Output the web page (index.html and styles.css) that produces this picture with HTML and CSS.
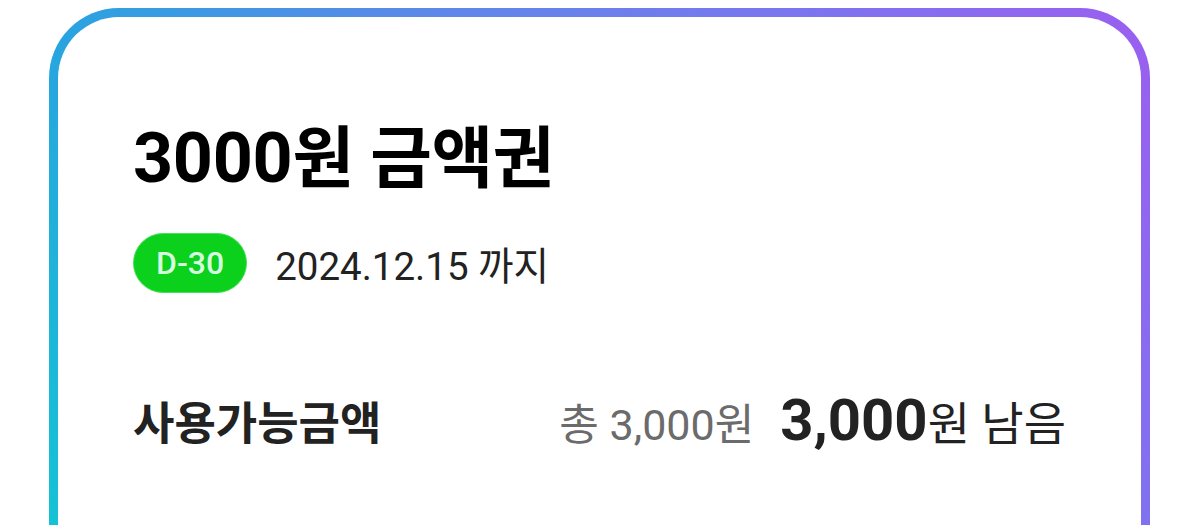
FILE: index.html
```html
<!DOCTYPE html>
<html lang="ko">
<head>
<meta charset="utf-8">
<title>3000원 금액권</title>
<link rel="stylesheet" href="styles.css">
</head>
<body>
<div class="page">
  <section class="card">
    <h1 class="title"><span class="title-num">3000</span>원 금액권</h1>
    <div class="expiry">
      <span class="badge">D-30</span>
      <span class="date">2024.12.15 까지</span>
    </div>
    <div class="balance">
      <span class="balance-label">사용가능금액</span>
      <div class="balance-values">
        <span class="total">총 3,000원</span>
        <span class="remain"><b class="remain-num">3,000</b>원 남음</span>
      </div>
    </div>
  </section>
</div>
</body>
</html>
```

FILE: styles.css
```css
html, body {
  margin: 0;
  padding: 0;
  background: #ffffff;
  overflow: hidden;
}

body {
  font-family: Roboto, "Noto Sans CJK KR", sans-serif;
  color: #222222;
}

.page {
  height: 525px;
  padding: 8px 50px 0 49px;
  box-sizing: border-box;
}

.card {
  height: 600px;
  box-sizing: border-box;
  border: 9px solid transparent;
  border-radius: 70px;
  background:
    linear-gradient(#ffffff, #ffffff) padding-box,
    linear-gradient(60deg, #0ccad2 0%, #14c3d5 3%, #29a3e0 24%, #5a8ae8 48%, #7d74ef 77%, #9b5ef0 100%) border-box;
  padding: 100px 75px 0 75px;
}

.title {
  margin: 0;
  font-size: 67px;
  line-height: 82px;
  font-weight: 700;
  color: #000000;
  letter-spacing: -0.3px;
}

.title-num {
  font-size: 70px;
}

.expiry {
  display: flex;
  align-items: center;
  gap: 28px;
  margin-top: 33px;
}

.badge {
  display: inline-flex;
  align-items: center;
  justify-content: center;
  height: 60px;
  padding: 0 22px;
  box-sizing: border-box;
  border-radius: 30px;
  background: #0bd01c;
  border: 1px solid #46e05a;
  color: #d6fde0;
  font-size: 32px;
  font-weight: 500;
}

.date {
  font-size: 38.5px;
  color: #222222;
}

.balance {
  display: flex;
  justify-content: space-between;
  align-items: baseline;
  margin-top: 93px;
}

.balance-label {
  font-size: 45px;
  font-weight: 700;
  color: #222222;
}

.balance-values {
  display: flex;
  align-items: baseline;
  gap: 26px;
}

.total {
  font-size: 43px;
  color: #6b6b6b;
}

.remain {
  font-size: 46px;
  color: #222222;
}

.remain-num {
  font-size: 58px;
  font-weight: 700;
}
```
